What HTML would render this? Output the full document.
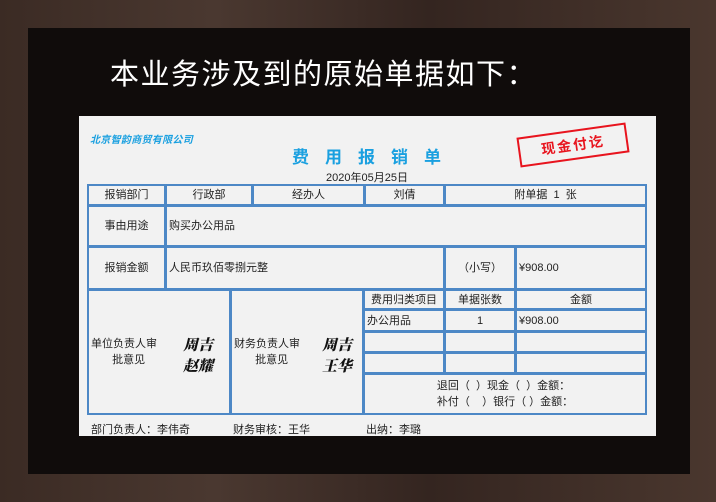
<!DOCTYPE html>
<html><head><meta charset="utf-8"><style>
*{margin:0;padding:0;box-sizing:border-box}
body{width:716px;height:502px;overflow:hidden;position:relative;background:linear-gradient(90deg,#3b2b24,#4a3830 30%,#342520 60%,#4a372e);font-family:"Liberation Sans","Noto Sans CJK SC",sans-serif}
.panel{position:absolute;left:28px;top:28px;width:662px;height:446px;background:#100c0b}
.h{position:absolute;left:110px;top:51px;color:#fff;font-size:29px;letter-spacing:1.5px;white-space:nowrap}
.paper{position:absolute;left:79px;top:116px;width:577px;height:320px;background:#f2f2f2}
.c{position:absolute;border:2px solid #4d88c6;display:flex;align-items:center;justify-content:center;font-size:11px;color:#222;text-align:center;line-height:16px;margin-left:-1px;margin-top:-1px}
.l{justify-content:flex-start;padding-left:2px}
.t{position:absolute;font-size:11px;color:#222;white-space:nowrap}
.sig{font-family:"Noto Serif CJK SC",serif;font-weight:900;font-size:15px;line-height:21px;color:#111;font-style:italic;position:absolute}
</style></head><body>
<div class="panel"></div>
<div class="h">本业务涉及到的原始单据如下：</div>
<div class="paper"></div>
<div class="t" style="left:90px;top:131px;color:#1aa0e0;font-size:10px;font-weight:bold;font-style:italic;letter-spacing:0.3px">北京智韵商贸有限公司</div>
<div class="t" style="left:292px;top:143px;color:#1aa0e0;font-size:17px;font-weight:bold;letter-spacing:16px">费用报销单</div>
<div class="t" style="left:326px;top:169px;font-size:11px">2020年05月25日</div>
<div style="position:absolute;left:518px;top:130px;width:110px;height:30px;border:2.5px solid #e8141e;transform:rotate(-8deg);color:#e8141e;font-weight:bold;font-size:14px;display:flex;align-items:center;justify-content:center;letter-spacing:2px">现金付讫</div>

<div class="c" style="left:88px;top:185px;width:79px;height:22px">报销部门</div>
<div class="c" style="left:166px;top:185px;width:88px;height:22px">行政部</div>
<div class="c" style="left:253px;top:185px;width:113px;height:22px">经办人</div>
<div class="c" style="left:365px;top:185px;width:81px;height:22px">刘倩</div>
<div class="c" style="left:445px;top:185px;width:203px;height:22px">附单据&nbsp; 1&nbsp; 张</div>

<div class="c" style="left:88px;top:206px;width:79px;height:42px">事由用途</div>
<div class="c l" style="left:166px;top:206px;width:482px;height:42px">购买办公用品</div>

<div class="c" style="left:88px;top:247px;width:79px;height:44px">报销金额</div>
<div class="c l" style="left:166px;top:247px;width:280px;height:44px">人民币玖佰零捌元整</div>
<div class="c" style="left:445px;top:247px;width:72px;height:44px">（小写）</div>
<div class="c l" style="left:516px;top:247px;width:132px;height:44px">¥908.00</div>

<div class="c" style="left:88px;top:290px;width:144px;height:126px;justify-content:flex-start;padding-left:2px">单位负责人审<br>&nbsp;&nbsp;&nbsp;批意见</div>
<div class="c" style="left:231px;top:290px;width:134px;height:126px;justify-content:flex-start;padding-left:2px">财务负责人审<br>&nbsp;&nbsp;&nbsp;批意见</div>
<div class="sig" style="left:183px;top:334px">周吉<br>赵耀</div>
<div class="sig" style="left:322px;top:334px">周吉<br>王华</div>

<div class="c" style="left:364px;top:290px;width:82px;height:21px">费用归类项目</div>
<div class="c" style="left:445px;top:290px;width:72px;height:21px">单据张数</div>
<div class="c" style="left:516px;top:290px;width:132px;height:21px">金额</div>
<div class="c l" style="left:364px;top:310px;width:82px;height:23px">办公用品</div>
<div class="c" style="left:445px;top:310px;width:72px;height:23px">1</div>
<div class="c l" style="left:516px;top:310px;width:132px;height:23px">¥908.00</div>
<div class="c" style="left:364px;top:332px;width:82px;height:22px"></div>
<div class="c" style="left:445px;top:332px;width:72px;height:22px"></div>
<div class="c" style="left:516px;top:332px;width:132px;height:22px"></div>
<div class="c" style="left:364px;top:353px;width:82px;height:22px"></div>
<div class="c" style="left:445px;top:353px;width:72px;height:22px"></div>
<div class="c" style="left:516px;top:353px;width:132px;height:22px"></div>
<div class="c" style="left:364px;top:374px;width:284px;height:42px;text-align:left">退回（&nbsp; ）现金（&nbsp; ）金额：<br>补付（&nbsp;&nbsp;&nbsp; ）银行（ ）金额：</div>

<div class="t" style="left:91px;top:421px">部门负责人：李伟奇</div>
<div class="t" style="left:233px;top:421px">财务审核：王华</div>
<div class="t" style="left:366px;top:421px">出纳：李璐</div>
</body></html>
